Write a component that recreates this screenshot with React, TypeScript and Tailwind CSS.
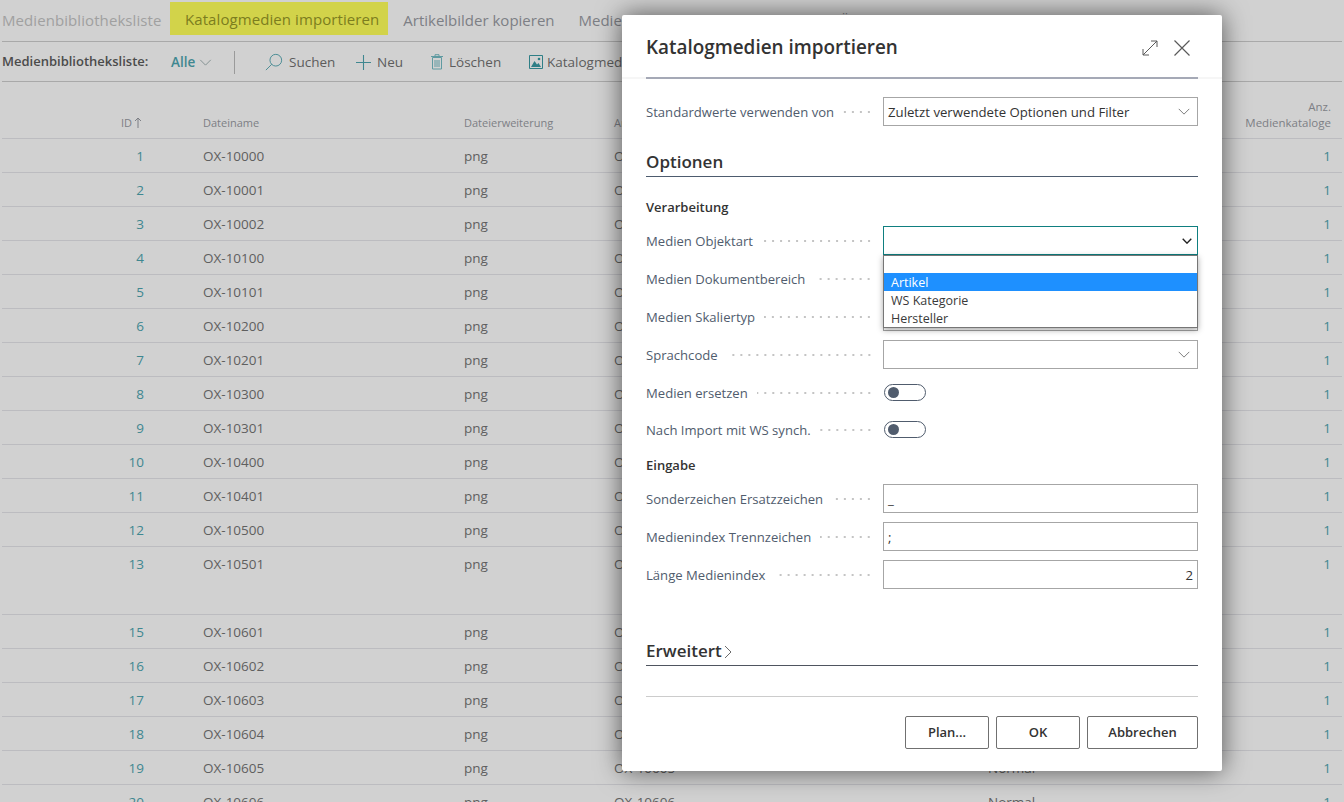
const rows = [
  ['1', 'OX-10000'],
  ['2', 'OX-10001'],
  ['3', 'OX-10002'],
  ['4', 'OX-10100'],
  ['5', 'OX-10101'],
  ['6', 'OX-10200'],
  ['7', 'OX-10201'],
  ['8', 'OX-10300'],
  ['9', 'OX-10301'],
  ['10', 'OX-10400'],
  ['11', 'OX-10401'],
  ['12', 'OX-10500'],
  ['13', 'OX-10501'],
  ['15', 'OX-10601'],
  ['16', 'OX-10602'],
  ['17', 'OX-10603'],
  ['18', 'OX-10604'],
  ['19', 'OX-10605'],
  ['20', 'OX-10606'],
];

function Chevron({ className }: { className: string }) {
  return (
    <svg viewBox="0 0 14 8" className={className} fill="none" stroke="currentColor" strokeWidth="1">
      <path d="M1 1l6 6 6-6" />
    </svg>
  );
}

function Toolbar() {
  return (
    <div className="mx-[2px] flex h-[40px] items-center border-b border-[#a9a9a9] pt-[1px] text-[13.5px]">
      <span className="w-[169px] text-[13px] font-semibold text-[#4b4b4b]">Medienbibliotheksliste:</span>
      <span className="w-[25px] font-semibold text-[#3f8790]">Alle</span>
      <Chevron className="ml-[3px] h-[7px] w-[13px] text-[#7b8a8c]" />
      <div className="ml-[22px] h-[23px] w-px bg-[#9a9a9a]" />
      <svg viewBox="0 0 20 20" className="ml-[30px] h-[18px] w-[18px] text-[#3f8790]" fill="none" stroke="currentColor" strokeWidth="1">
        <circle cx="12" cy="8" r="6.5" />
        <path d="M7.5 12.5L1 19" />
      </svg>
      <span className="ml-[6px] w-[46px] text-[#5c5c5c]">Suchen</span>
      <svg viewBox="0 0 14 14" className="ml-[21px] h-[15px] w-[15px] text-[#3f8790]" fill="none" stroke="currentColor" strokeWidth="1">
        <path d="M7 0v14M0 7h14" />
      </svg>
      <span className="ml-[6px] w-[25px] text-[#5c5c5c]">Neu</span>
      <svg viewBox="0 0 12 16" className="ml-[29px] h-[16px] w-[12px] text-[#5f9aa1]" fill="none" stroke="currentColor" strokeWidth="1">
        <path d="M1.5 3.5h9V15h-9zM0 2.5h12M4 2.5V.7h4v1.8M4 6v7M6 6v7M8 6v7" />
      </svg>
      <span className="ml-[6px] w-[51px] text-[#5c5c5c]">Löschen</span>
      <svg viewBox="0 0 14 14" className="ml-[29px] h-[14px] w-[14px] text-[#2f7f86]">
        <path fill="none" stroke="currentColor" d="M.5.5h13v13H.5z" />
        <path fill="currentColor" d="M2 12l3.5-6 2.5 3.5 1.5-1.5 2.5 4z" />
        <circle cx="10" cy="4" r="1.3" fill="currentColor" />
      </svg>
      <span className="ml-[4px] text-[#5c5c5c]">Katalogmedien</span>
    </div>
  );
}

function Table() {
  return (
    <div className="mx-[2px] text-[13.5px] text-[#5f5f5f]">
      <div className="grid h-[57px] grid-cols-[142px_261px_150px_374px_1fr] items-end border-b border-[#bcbcc0] pb-[7px] text-[11px] text-[#7d7f85]">
        <span className="flex items-center justify-end gap-[2px] pr-[2px] text-[11px]">
          ID
          <svg viewBox="0 0 8 11" className="h-[11px] w-[8px]" fill="none" stroke="currentColor" strokeWidth="1">
            <path d="M4 11V1M1 4l3-3 3 3" />
          </svg>
        </span>
        <span className="pl-[59px]">Dateiname</span>
        <span className="pl-[59px] whitespace-nowrap">Dateierweiterung</span>
        <span className="pl-[59px] whitespace-nowrap">Anzeigename</span>
        <span className="pr-[11px] text-right text-[11.5px] leading-[16px]">
          Anz.
          <br />
          Medienkataloge
        </span>
      </div>
      {rows.map(([id, name]) => (
        <div
          key={id}
          className={`grid grid-cols-[142px_261px_150px_374px_1fr] border-b border-[#bcbcc0] pt-[7px] ${
            id === '13' ? 'h-[68px]' : 'h-[34px]'
          }`}
        >
          <span className="text-right text-[#3f8790]">{id}</span>
          <span className="pl-[59px]">{name}</span>
          <span className="pl-[59px]">png</span>
          <span className="pl-[59px]">{name}</span>
          <span className="flex justify-between pl-[59px] pr-[11px]">
            <span>Normal</span>
            <span className="text-[#3f8790]">1</span>
          </span>
        </div>
      ))}
    </div>
  );
}

function Field({ label, children }: { label: string; children: React.ReactNode }) {
  return (
    <div className="flex h-[29px] items-center">
      <div className="flex w-[227px] shrink-0 items-center pt-[2px]">
        <span className="whitespace-nowrap text-[13.1px] text-[#505c6d]">{label}</span>
        <span className="ml-[9px] h-[2px] flex-1 bg-[radial-gradient(circle,#c4c4c4_1px,transparent_1px)] bg-[length:8px_2px] bg-right" />
      </div>
      <div className="ml-[10px] flex-1">{children}</div>
    </div>
  );
}

function Box({ value, align, chevron }: { value?: string; align?: string; chevron?: boolean }) {
  return (
    <div
      className={`flex h-[29px] items-center justify-between border border-[#a6a6a6] px-[4px] pt-[2px] text-[13.2px] text-[#333333] ${align ?? ''}`}
    >
      <span>{value}</span>
      {chevron && <Chevron className="mr-[2px] mb-[2px] h-[7px] w-[14px] text-[#6b6b6b]" />}
    </div>
  );
}

function Toggle() {
  return (
    <div className="ml-[1px] flex h-[17px] w-[42px] items-center rounded-full border border-[#505c6d] pl-[3px]">
      <div className="h-[11px] w-[11px] rounded-full bg-[#505c6d]" />
    </div>
  );
}

function Dialog() {
  return (
    <div className="absolute top-[15px] left-[622px] flex h-[756px] w-[600px] flex-col rounded-[2px] bg-white px-[24px] shadow-[0_0_26px_rgba(0,0,0,0.6)]">
      <div className="-mx-[24px] h-[64px] shrink-0 border-b-2 border-[#f6f6f6] px-[24px]">
        <div className="flex h-[64px] items-center justify-between border-b-2 border-[#a5a9b6] pt-[3px]">
          <span className="text-[18.9px] font-semibold text-[#333333]">Katalogmedien importieren</span>
          <div className="flex items-center gap-[16px] pr-[8px] text-[#5a5a5a]">
            <svg viewBox="0 0 16 16" className="h-[16px] w-[16px]" fill="none" stroke="currentColor" strokeWidth="1">
              <path d="M1 15L15 1M9 1h6v6M1 9v6h6" />
            </svg>
            <svg viewBox="0 0 16 16" className="h-[16px] w-[16px]" fill="none" stroke="currentColor" strokeWidth="1.2">
              <path d="M.5.5l15 15M15.5.5l-15 15" />
            </svg>
          </div>
        </div>
      </div>

      <div className="mt-[18px]">
        <Field label="Standardwerte verwenden von">
          <Box value="Zuletzt verwendete Optionen und Filter" chevron />
        </Field>
      </div>

      <div className="mt-[23px] flex h-[28px] items-center border-b border-[#4d5b6e] pb-[2px] text-[17px] font-semibold text-[#333333]">
        Optionen
      </div>

      <div className="mt-[21px] h-[20px] text-[13px] font-semibold text-[#333333]">Verarbeitung</div>

      <div className="relative mt-[8px] flex flex-col gap-[9px]">
        <Field label="Medien Objektart">
          <div className="flex h-[29px] items-center justify-end border border-[#0f7f80] pr-[4px] text-[#222222]">
            <Chevron className="mr-[1px] h-[6px] w-[10px] stroke-2" />
          </div>
        </Field>
        <Field label="Medien Dokumentbereich">
          <Box chevron />
        </Field>
        <Field label="Medien Skaliertyp">
          <Box chevron />
        </Field>
        <Field label="Sprachcode">
          <Box chevron />
        </Field>

        <div className="absolute top-[29px] left-[237px] z-10 w-[315px] border border-[#767676] bg-white pt-[1px] text-[12.5px] leading-[20px] text-[#3a3a3a] shadow-[0_2px_6px_rgba(0,0,0,0.35)]">
          <div className="h-[16px]" />
          <div className="h-[18px] bg-[#1e90ff] pl-[7px] text-white">Artikel</div>
          <div className="h-[18px] pl-[7px]">WS Kategorie</div>
          <div className="h-[18px] pl-[7px]">Hersteller</div>
        </div>
      </div>

      <div className="mt-[9px]">
        <Field label="Medien ersetzen">
          <Toggle />
        </Field>
      </div>
      <div className="mt-[8px]">
        <Field label="Nach Import mit WS synch.">
          <Toggle />
        </Field>
      </div>

      <div className="mt-[12px] h-[20px] text-[13px] font-semibold text-[#333333]">Eingabe</div>

      <div className="mt-[8px] flex flex-col gap-[9px]">
        <Field label="Sonderzeichen Ersatzzeichen">
          <Box value="_" />
        </Field>
        <Field label="Medienindex Trennzeichen">
          <Box value=";" />
        </Field>
        <Field label="Länge Medienindex">
          <Box value="2" align="[&>span]:ml-auto" />
        </Field>
      </div>

      <div className="mt-[47px] flex h-[30px] items-center gap-[2px] border-b border-[#4f5560] text-[17px] font-semibold text-[#333333]">
        Erweitert
        <svg viewBox="0 0 8 14" className="mt-[2px] h-[14px] w-[8px] text-[#6b6b6b]" fill="none" stroke="currentColor" strokeWidth="1">
          <path d="M1 1l6 6-6 6" />
        </svg>
      </div>

      <div className="mt-[30px] flex justify-end gap-[7px] border-t border-[#cccccc] pt-[19px]">
        {[
          ['Plan...', 'w-[84px]'],
          ['OK', 'w-[84px]'],
          ['Abbrechen', 'w-[111px]'],
        ].map(([label, width]) => (
          <button
            key={label}
            className={`h-[33px] rounded-[2px] border border-[#707070] text-[13px] font-semibold text-[#333333] ${width}`}
          >
            {label}
          </button>
        ))}
      </div>
    </div>
  );
}

export default function App() {
  return (
    <div className="relative h-[802px] w-[1344px] overflow-hidden bg-[#d1d1d1] font-['Open_Sans',sans-serif]">
      <div className="mx-[2px] flex h-[42px] items-start border-b border-[#a9a9a9] pt-[2px] text-[15px] text-[#7d7f85] whitespace-nowrap">
        <span className="mt-[7px] w-[159px] tracking-[0.08px] text-[#a0a0a0]">Medienbibliotheksliste</span>
        <span className="ml-[9px] flex h-[33px] items-center bg-[#d2d34a] pt-[2px] pr-[9px] pl-[15px] tracking-[0.08px] text-[#7c7d1e]">
          Katalogmedien importieren
        </span>
        <span className="mt-[7px] ml-[15px]">Artikelbilder kopieren</span>
        <span className="mt-[7px] ml-[24px]">Medienbeschreibungen aus WW und Überblick</span>
      </div>
      <Toolbar />
      <Table />
      <Dialog />
    </div>
  );
}
